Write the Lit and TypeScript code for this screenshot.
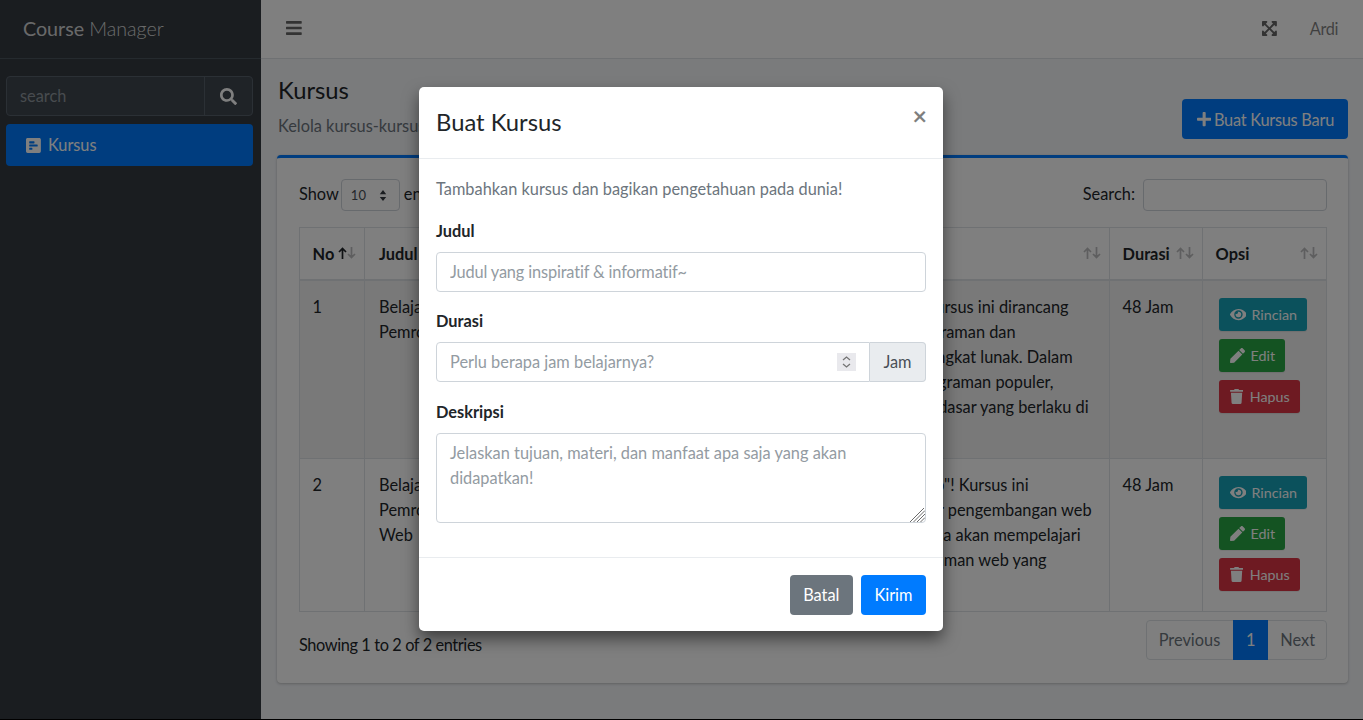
import { LitElement, html, css, svg } from 'lit';
import { customElement } from 'lit/decorators.js';

const ICONS: Record<string, { w: number; d: string }> = {
    bars: { w: 448, d: "M16 132h416c8.837 0 16-7.163 16-16V76c0-8.837-7.163-16-16-16H16C7.163 60 0 67.163 0 76v40c0 8.837 7.163 16 16 16zm0 160h416c8.837 0 16-7.163 16-16v-40c0-8.837-7.163-16-16-16H16c-8.837 0-16 7.163-16 16v40c0 8.837 7.163 16 16 16zm0 160h416c8.837 0 16-7.163 16-16v-40c0-8.837-7.163-16-16-16H16c-8.837 0-16 7.163-16 16v40c0 8.837 7.163 16 16 16z" },
    search: { w: 512, d: "M505 442.7L405.3 343c-4.5-4.5-10.6-7-17-7H372c27.6-35.3 44-79.7 44-128C416 93.1 322.9 0 208 0S0 93.1 0 208s93.1 208 208 208c48.3 0 92.7-16.4 128-44v16.3c0 6.4 2.5 12.5 7 17l99.7 99.7c9.4 9.4 24.6 9.4 33.9 0l28.3-28.3c9.4-9.4 9.4-24.6.1-34zM208 336c-70.7 0-128-57.2-128-128 0-70.7 57.2-128 128-128 70.7 0 128 57.2 128 128 0 70.7-57.2 128-128 128z" },
    plus: { w: 448, d: "M416 208H272V64c0-17.67-14.33-32-32-32h-32c-17.67 0-32 14.33-32 32v144H32c-17.67 0-32 14.33-32 32v32c0 17.67 14.33 32 32 32h144v144c0 17.67 14.33 32 32 32h32c17.67 0 32-14.33 32-32V304h144c17.67 0 32-14.33 32-32v-32c0-17.67-14.33-32-32-32z" },
    eye: { w: 576, d: "M572.52 241.4C518.29 135.59 410.93 64 288 64S57.68 135.64 3.48 241.41a32.35 32.35 0 0 0 0 29.19C57.71 376.41 165.07 448 288 448s230.32-71.64 284.52-177.41a32.35 32.35 0 0 0 0-29.19zM288 400a144 144 0 1 1 144-144 143.93 143.93 0 0 1-144 144zm0-240a95.31 95.31 0 0 0-25.31 3.79 47.85 47.85 0 0 1-66.9 66.9A95.78 95.78 0 1 0 288 160z" },
    pen: { w: 512, d: "M290.74 93.24l128.02 128.02-277.99 277.99-114.14 12.6C11.35 513.54-1.56 500.62.14 485.34l12.7-114.22 277.9-277.88zm207.2-19.06l-60.11-60.11c-18.75-18.75-49.16-18.75-67.91 0l-56.55 56.55 128.02 128.02 56.55-56.55c18.75-18.76 18.75-49.16 0-67.91z" },
    trash: { w: 448, d: "M432 32H312l-9.4-18.7A24 24 0 0 0 281.1 0H166.8a23.72 23.72 0 0 0-21.4 13.3L136 32H16A16 16 0 0 0 0 48v32a16 16 0 0 0 16 16h416a16 16 0 0 0 16-16V48a16 16 0 0 0-16-16zM53.2 467a48 48 0 0 0 47.9 45h245.8a48 48 0 0 0 47.9-45L416 128H32z" },
    expand: { w: 448, d: "M448 344v112a23.94 23.94 0 0 1-24 24H312c-21.39 0-32.09-25.9-17-41l36.2-36.2L224 295.6 116.77 402.9 153 439c15.09 15.1 4.39 41-17 41H24a23.94 23.94 0 0 1-24-24V344c0-21.4 25.89-32.1 41-17l36.19 36.2L184.46 256 77.18 148.7 41 185c-15.1 15.1-41 4.4-41-17V56a23.94 23.94 0 0 1 24-24h112c21.39 0 32.09 25.9 17 41l-36.2 36.2L224 216.4l107.23-107.3L295 73c-15.09-15.1-4.39-41 17-41h112a23.94 23.94 0 0 1 24 24v112c0 21.4-25.89 32.1-41 17l-36.19-36.2L263.54 256l107.28 107.3L407 327.1c15.1-15.2 41-4.5 41 16.9z" },
    poll: { w: 448, d: "M448 432V80c0-26.5-21.5-48-48-48H48C21.5 32 0 53.5 0 80v352c0 26.5 21.5 48 48 48h352c26.5 0 48-21.5 48-48zM112 192c-8.84 0-16-7.16-16-16v-32c0-8.84 7.16-16 16-16h128c8.84 0 16 7.16 16 16v32c0 8.84-7.16 16-16 16H112zm0 96c-8.84 0-16-7.16-16-16v-32c0-8.84 7.16-16 16-16h224c8.84 0 16 7.16 16 16v32c0 8.84-7.16 16-16 16H112zm0 96c-8.84 0-16-7.16-16-16v-32c0-8.84 7.16-16 16-16h64c8.84 0 16 7.16 16 16v32c0 8.84-7.16 16-16 16h-64z" },
};

const icon = (name: string, cls = "") => {
    const i = ICONS[name];
    return html`<svg class="ico ${cls}" viewBox="0 0 ${i.w} 512" fill="currentColor">${svg`<path fill-rule="evenodd" d="${i.d}"></path>`}</svg>`;
};

// the description column sits mostly under the modal, end = x where each line stops
const DESC_LEFT = 577;
const COURSES = [
    {
        no: 1,
        title: ["Belajar Dasar", "Pemrograman"],
        desc: [
            { text: "Kursus ini dirancang", end: 1068 },
            { text: "pemrograman dan", end: 1015 },
            { text: "perangkat lunak. Dalam", end: 1072 },
            { text: "pemrograman populer,", end: 1053 },
            { text: "konsep dasar yang berlaku di", end: 1088 },
            { text: "semua bahasa.", end: 800 },
        ],
    },
    {
        no: 2,
        title: ["Belajar Dasar", "Pemrograman", "Web"],
        desc: [
            { text: "Dasar Web\"! Kursus ini", end: 1028 },
            { text: "dasar pengembangan web", end: 1091 },
            { text: "Anda akan mempelajari", end: 1080 },
            { text: "halaman web yang", end: 1046 },
            { text: "menarik.", end: 800 },
        ],
    },
];

const HEADERS = ["No", "Judul", "Deskripsi", "Durasi", "Opsi"];

@customElement('app-root')
export class AppRoot extends LitElement {

    static styles = css`
    :host{
        display: block;
        position: relative;
        height: 720px;
        overflow: hidden;
        background: #000;
        font-family: "Lato", "Liberation Sans", sans-serif;
        font-size: 16.35px;
        line-height: 25.2px;
        color: #212529;
    }
    * { box-sizing: border-box; }
    .ico{ display: block; height: 1em; flex: none; }

    .layout{ display: flex; height: 719px; }

    .sidebar{ width: 261px; flex: none; background: #343a40; }
    .brand{
        height: 59px;
        padding: 0 23px;
        display: flex;
        align-items: center;
        gap: 5px;
        font-size: 19.7px;
        color: rgba(255,255,255,.8);
        border-bottom: 1px solid #4b545c;
    }
    .brand span{ font-weight: 300; }
    .side-search{
        display: flex;
        margin: 17px 8px 8px 6px;
        height: 40px;
        border: 1px solid #56606a;
        border-radius: 4px;
        background: #3f474e;
    }
    .side-search .ph{ flex: 1; padding: 6px 13px; color: #8f979e; }
    .side-search .btn{
        width: 48px;
        display: flex;
        align-items: center;
        justify-content: center;
        border-left: 1px solid #56606a;
        color: #fff;
        font-size: 17px;
    }
    .side-item{
        margin: 0 8px 0 6px;
        height: 42px;
        padding: 0 20px;
        display: flex;
        align-items: center;
        gap: 7px;
        background: #007bff;
        color: #fff;
        border-radius: 4px;
    }
    .side-item .ico{ font-size: 17px; }

    .main{ flex: 1; min-width: 0; background: #f4f6f9; }
    .topbar{
        height: 59px;
        background: #fff;
        border-bottom: 1px solid #dee2e6;
        display: flex;
        align-items: center;
        padding: 0 25px 2px;
        color: rgba(0,0,0,.5);
    }
    .topbar .bars{ font-size: 18px; color: rgba(0,0,0,.6); }
    .topbar .expand{ margin-left: auto; font-size: 17px; color: rgba(0,0,0,.6); }
    .topbar .user{ margin-left: 33px; padding-top: 2px; letter-spacing: -.4px; }

    .content{ padding: 16px 15px 0 17px; }
    .heading{
        display: flex;
        justify-content: space-between;
        align-items: flex-end;
        margin-bottom: 16px;
    }
    .heading h1{
        margin: 0 0 8px;
        font-size: 23.8px;
        line-height: 30px;
        font-weight: 400;
    }
    .heading p{ margin: 0 0 1px; color: #6c757d; }
    .btn-primary{
        height: 40px;
        padding: 0 14px 0 15px;
        display: flex;
        align-items: center;
        gap: 3px;
        border-radius: 4px;
        background: #007bff;
        color: #fff;
        letter-spacing: -.25px;
    }

    .card{
        margin-left: -1px;
        background: #fff;
        border-top: 3px solid #007bff;
        border-radius: 4px;
        box-shadow: 0 0 1px rgba(0,0,0,.125), 0 1px 3px rgba(0,0,0,.2);
        padding: 21px 21px 23px 22px;
    }
    .table-top{
        display: flex;
        justify-content: space-between;
        align-items: center;
        height: 32px;
        margin-bottom: 16px;
    }
    .inline{ display: flex; align-items: flex-start; gap: 2px; line-height: 30px; }
    .select{
        width: 59px;
        height: 32px;
        margin-right: 2px;
        border: 1px solid #ced4da;
        border-radius: 4px;
        display: flex;
        align-items: center;
        justify-content: space-between;
        padding: 0 12px 0 9px;
        font-size: 13px;
        color: #495057;
    }
    .select svg{ width: 8px; height: 11px; }
    .search-box{
        width: 184px;
        height: 32px;
        margin-left: 6px;
        border: 1px solid #ced4da;
        border-radius: 4px;
    }

    table{
        width: 100%;
        table-layout: fixed;
        border-collapse: collapse;
        border: 1px solid #dee2e6;
    }
    th, td{
        border: 1px solid #dee2e6;
        padding: 13px 12.6px;
        text-align: left;
        vertical-align: top;
        font-weight: 400;
    }
    th{
        padding: 12.6px;
        font-weight: 700;
        border-bottom-width: 2px;
        position: relative;
    }
    th:nth-child(2), td:nth-child(2){ padding-left: 14px; }
    .sort{
        position: absolute;
        right: 8px;
        top: 19px;
        width: 18px;
        height: 12px;
    }
    .desc{ overflow: hidden; }
    .desc div{ white-space: nowrap; text-align: right; }
    tbody tr:nth-child(odd){ background: rgba(0,0,0,.05); }

    .actions{
        display: flex;
        flex-direction: column;
        align-items: flex-start;
        gap: 8px;
        margin: 4px 0 7px 3px;
    }
    .btn-sm{
        height: 33px;
        padding: 0 10px 0 11px;
        display: flex;
        align-items: center;
        gap: 5px;
        border-radius: 3px;
        color: #fff;
        font-size: 14.3px;
        box-shadow: 0 1px 1px rgba(0,0,0,.075);
    }
    .btn-sm span{ padding-top: 1px; }
    .btn-sm .ico{ height: 15px; }
    .info{ background: #17a2b8; }
    .success{ background: #28a745; gap: 6px; }
    .danger{ background: #dc3545; gap: 7px; }

    .table-bottom{
        display: flex;
        justify-content: space-between;
        margin-top: 8px;
    }
    .table-bottom .count{ padding-top: 12px; letter-spacing: -.4px; }
    .pager{
        display: flex;
        height: 40px;
        border: 1px solid #dee2e6;
        border-radius: 4px;
        color: #6c757d;
    }
    .pager div{ display: flex; align-items: center; padding: 0 13px 0 12px; }
    .pager div:last-child{ padding: 0 11px 0 12px; }
    .pager .active{
        background: #007bff;
        color: #fff;
        margin: -1px 0;
        width: 35px;
        justify-content: center;
        padding: 0;
    }

    .backdrop{
        position: absolute;
        inset: 0;
        background: rgba(0,0,0,.5);
    }
    .modal{
        position: absolute;
        left: 419px;
        top: 87px;
        width: 524px;
        background: #fff;
        border-radius: 5px;
        box-shadow: 0 8px 16px rgba(0,0,0,.5);
    }
    .modal-head{
        display: flex;
        justify-content: space-between;
        padding: 17px;
        height: 72px;
        border-bottom: 1px solid #e9ecef;
    }
    .modal-head h2{
        margin: 0;
        font-size: 23.8px;
        line-height: 37.8px;
        font-weight: 400;
    }
    .close{
        font-size: 25px;
        line-height: 25px;
        font-weight: 700;
        color: #000;
        opacity: .5;
        margin: -1px -1px 0 0;
    }
    .modal-body{ padding: 17px 17px 18px; }
    .modal-body p{ margin: 0 0 17px; line-height: 25px; color: #6c757d; }
    .group{ margin-bottom: 16px; }
    .group:nth-child(3){ margin-bottom: 17px; }
    label{ display: block; font-weight: 700; line-height: 25px; margin-bottom: 9px; }
    input, textarea{
        display: block;
        width: 100%;
        height: 40px;
        padding: 5px 13px 7px;
        border: 1px solid #ced4da;
        border-radius: 4px;
        font: inherit;
        color: #495057;
        outline: none;
        background: #fff;
    }
    input::placeholder, textarea::placeholder{ color: #939ba2; opacity: 1; }
    input[type=text]::placeholder{ letter-spacing: -.15px; }
    input[type=number]{ appearance: textfield; }
    textarea{ height: 90px; padding: 6px 13px; resize: none; }
    .input-group{ display: flex; }
    .number{ flex: 1; min-width: 0; position: relative; }
    .number input{ border-radius: 4px 0 0 4px; }
    .spin{
        position: absolute;
        right: 14px;
        top: 11px;
        width: 19px;
        height: 18px;
        background: #e9e9ed;
    }
    .spin svg{ display: block; width: 19px; height: 18px; }
    .addon{
        width: 56px;
        display: flex;
        align-items: center;
        justify-content: center;
        background: #e9ecef;
        border: 1px solid #ced4da;
        border-left: 0;
        border-radius: 0 4px 4px 0;
        color: #495057;
    }
    .area{ position: relative; }
    .grip{
        position: absolute;
        right: 1.5px;
        bottom: 1px;
        width: 15px;
        height: 14px;
    }
    .modal-foot{
        display: flex;
        justify-content: flex-end;
        gap: 8px;
        padding: 17px 17px 16px;
        border-top: 1px solid #e9ecef;
    }
    .modal-foot div{
        height: 40px;
        padding: 0 13.5px;
        display: flex;
        align-items: center;
        color: #fff;
        border-radius: 4px;
    }
    .secondary{ background: #6c757d; }
    .primary{ background: #007bff; }
    `;

    private sortArrows(active: boolean) {
        return html`<svg class="sort" viewBox="0 0 18 12" fill="none" stroke="#212529" stroke-width="1.7">
            <path opacity="${active ? 1 : 0.3}" d="M4.5 12V1.5M1 5l3.5-3.5L8 5"></path>
            <path opacity="0.3" d="M13.5 0v10.5M10 7l3.5 3.5L17 7"></path>
        </svg>`;
    }

    render() {
        return html`
        <div class="layout">
            <aside class="sidebar">
                <div class="brand">Course <span>Manager</span></div>
                <div class="side-search">
                    <div class="ph">search</div>
                    <div class="btn">${icon("search")}</div>
                </div>
                <div class="side-item">${icon("poll")}<span>Kursus</span></div>
            </aside>
            <div class="main">
                <div class="topbar">
                    <span class="bars">${icon("bars")}</span>
                    <span class="expand">${icon("expand")}</span>
                    <span class="user">Ardi</span>
                </div>
                <div class="content">
                    <div class="heading">
                        <div>
                            <h1>Kursus</h1>
                            <p>Kelola kursus-kursus yang tersedia</p>
                        </div>
                        <div class="btn-primary">${icon("plus")}<span>Buat Kursus Baru</span></div>
                    </div>
                    <div class="card">
                        <div class="table-top">
                            <div class="inline">Show
                                <div class="select">10
                                    <svg viewBox="0 0 8 12" fill="#343a40"><path d="M4 0l3.5 4.5h-7zM4 12L.5 7.5h7z"></path></svg>
                                </div>
                                entries
                            </div>
                            <div class="inline">Search: <div class="search-box"></div></div>
                        </div>
                        <table>
                            <colgroup>
                                <col style="width:65px"><col style="width:200px"><col><col style="width:93px"><col style="width:124px">
                            </colgroup>
                            <thead>
                                <tr>${HEADERS.map((h, i) => html`<th>${h}${this.sortArrows(i === 0)}</th>`)}</tr>
                            </thead>
                            <tbody>
                                ${COURSES.map(c => html`
                                <tr>
                                    <td>${c.no}</td>
                                    <td>${c.title.map(t => html`<div>${t}</div>`)}</td>
                                    <td class="desc">${c.desc.map(d => html`<div style="width:${d.end - DESC_LEFT}px">${d.text}</div>`)}</td>
                                    <td>48 Jam</td>
                                    <td>
                                        <div class="actions">
                                            <div class="btn-sm info">${icon("eye")}<span>Rincian</span></div>
                                            <div class="btn-sm success">${icon("pen")}<span>Edit</span></div>
                                            <div class="btn-sm danger">${icon("trash")}<span>Hapus</span></div>
                                        </div>
                                    </td>
                                </tr>`)}
                            </tbody>
                        </table>
                        <div class="table-bottom">
                            <div class="count">Showing 1 to 2 of 2 entries</div>
                            <div class="pager">
                                <div>Previous</div>
                                <div class="active">1</div>
                                <div>Next</div>
                            </div>
                        </div>
                    </div>
                </div>
            </div>
        </div>
        <div class="backdrop"></div>
        <div class="modal">
            <div class="modal-head">
                <h2>Buat Kursus</h2>
                <span class="close">×</span>
            </div>
            <div class="modal-body">
                <p>Tambahkan kursus dan bagikan pengetahuan pada dunia!</p>
                <div class="group">
                    <label>Judul</label>
                    <input type="text" placeholder="Judul yang inspiratif & informatif~">
                </div>
                <div class="group">
                    <label>Durasi</label>
                    <div class="input-group">
                        <div class="number">
                            <input type="number" placeholder="Perlu berapa jam belajarnya?">
                            <div class="spin">
                                <svg viewBox="0 0 19 18" fill="none" stroke="#757575" stroke-width="1.3">
                                    <path d="M6 7l3.5-3L13 7M6 11l3.5 3L13 11"></path>
                                </svg>
                            </div>
                        </div>
                        <div class="addon">Jam</div>
                    </div>
                </div>
                <div class="group">
                    <label>Deskripsi</label>
                    <div class="area">
                        <textarea placeholder="Jelaskan tujuan, materi, dan manfaat apa saja yang akan didapatkan!"></textarea>
                        <svg class="grip" viewBox="0 0 15 14" fill="none" stroke="#6b6b6b" stroke-width="1">
                            <path d="M0 14L14 0M3.5 14L15 2.5M7 14L15 6M10.5 14L15 9.5"></path>
                        </svg>
                    </div>
                </div>
            </div>
            <div class="modal-foot">
                <div class="secondary">Batal</div>
                <div class="primary">Kirim</div>
            </div>
        </div>
        `;
    }
}
